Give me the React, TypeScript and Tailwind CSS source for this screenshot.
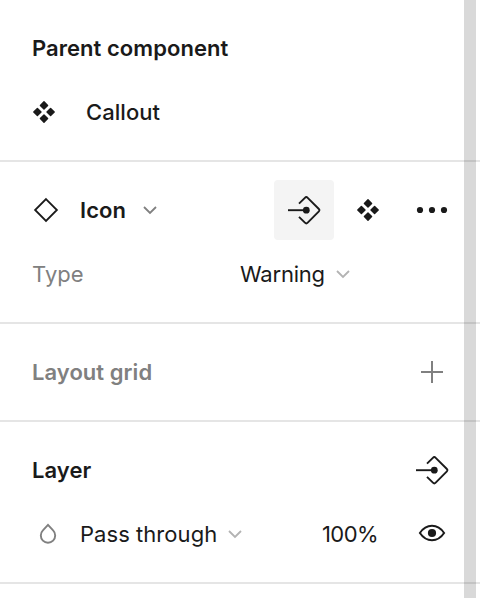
import type { ReactNode } from "react";

function Section({ children }: { children: ReactNode }) {
  return <section className="border-b-2 border-[#e5e5e5] py-4">{children}</section>;
}

function Row({ children }: { children: ReactNode }) {
  return <div className="flex h-16 items-center whitespace-nowrap pl-8">{children}</div>;
}

function ComponentIcon() {
  return (
    <svg width="24" height="24" viewBox="0 0 24 24" fill="currentColor" className="shrink-0">
      <path d="M12 1.8 15.6 5.4 12 9 8.4 5.4ZM5.4 8.4 9 12 5.4 15.6 1.8 12ZM18.6 8.4 22.2 12 18.6 15.6 15 12ZM12 15 15.6 18.6 12 22.2 8.4 18.6Z" stroke="currentColor" strokeWidth="1.4" strokeLinejoin="round" />
    </svg>
  );
}

function InstanceIcon() {
  return (
    <svg width="28" height="28" viewBox="0 0 28 28" fill="none" stroke="currentColor" strokeWidth="1.8" className="shrink-0">
      <path d="M14 3.1 24.9 14 14 24.9 3.1 14Z" />
    </svg>
  );
}

function ExposeIcon() {
  return (
    <svg width="34" height="32" viewBox="0 0 34 32" fill="none" stroke="currentColor" strokeWidth="1.9" className="shrink-0">
      <path d="M0 16.2H18" />
      <path d="M11 9.7 16.9 3.8Q18.3 2.4 19.7 3.8L30.9 15Q32.1 16.2 30.9 17.4L19.7 28.7Q18.3 30.1 16.9 28.7L11 22.8" />
      <circle cx="18.3" cy="16.2" r="3.4" fill="currentColor" stroke="none" />
    </svg>
  );
}

function Chevron() {
  return (
    <svg width="16" height="10" viewBox="0 0 16 10" fill="none" stroke="currentColor" strokeWidth="1.8" className="shrink-0">
      <path d="M2 2 8 8 14 2" />
    </svg>
  );
}

export default function App() {
  return (
    <main className="relative h-[598px] w-[480px] overflow-hidden bg-white font-['Inter',sans-serif] text-[22px] leading-8 tracking-[0.05px] text-[#1a1a1a] antialiased">
      <Section>
        <Row>
          <h2 className="font-semibold">Parent component</h2>
        </Row>
        <Row>
          <ComponentIcon />
          <span className="ml-[30px] font-medium">Callout</span>
        </Row>
      </Section>
      <Section>
        <Row>
          <div className="flex w-[242px] items-center">
            <InstanceIcon />
            <h2 className="ml-5 w-[62px] font-semibold">Icon</h2>
            <span className="text-[#808080]"><Chevron /></span>
          </div>
          <button className="flex size-[60px] items-center rounded bg-[#f4f4f4] pl-3.5">
            <ExposeIcon />
          </button>
          <span className="ml-[22px]"><ComponentIcon /></span>
          <svg width="32" height="8" viewBox="0 0 32 8" fill="currentColor" className="ml-9">
            <circle cx="4" cy="4" r="3.1" />
            <circle cx="16" cy="4" r="3.1" />
            <circle cx="28" cy="4" r="3.1" />
          </svg>
        </Row>
        <Row>
          <span className="w-52 text-[#808080]">Type</span>
          <span className="w-[95px] tracking-[-0.22px]">Warning</span>
          <span className="text-[#b3b3b3]"><Chevron /></span>
        </Row>
      </Section>
      <Section>
        <Row>
          <h2 className="w-[388px] font-semibold text-[#808080]">Layout grid</h2>
          <svg width="24" height="24" viewBox="0 0 24 24" stroke="#808080" strokeWidth="2">
            <path d="M12 1V23M1 12H23" />
          </svg>
        </Row>
      </Section>
      <Section>
        <Row>
          <h2 className="w-96 font-semibold">Layer</h2>
          <ExposeIcon />
        </Row>
        <Row>
          <svg width="32" height="32" viewBox="0 0 32 32" fill="none" stroke="#808080" strokeWidth="1.9">
            <path d="M16 6.8 10.9 12.4A7.2 7.2 0 1 0 21.1 12.4Z" />
          </svg>
          <div className="ml-4 flex w-[242px] items-center">
            <span className="w-[147px]">Pass through</span>
            <span className="text-[#b3b3b3]"><Chevron /></span>
          </div>
          <span className="w-24 tracking-[-0.6px]">100%</span>
          <svg width="28" height="28" viewBox="0 0 28 28" fill="none" stroke="currentColor" strokeWidth="2">
            <path d="M1.9 13Q6.7 5.8 14 5.8T26.1 13Q21.3 20.2 14 20.2T1.9 13Z" />
            <circle cx="14" cy="13" r="4.1" fill="currentColor" stroke="none" />
          </svg>
        </Row>
      </Section>
      <div className="absolute inset-y-0 right-1 w-3 bg-black/15" />
    </main>
  );
}
